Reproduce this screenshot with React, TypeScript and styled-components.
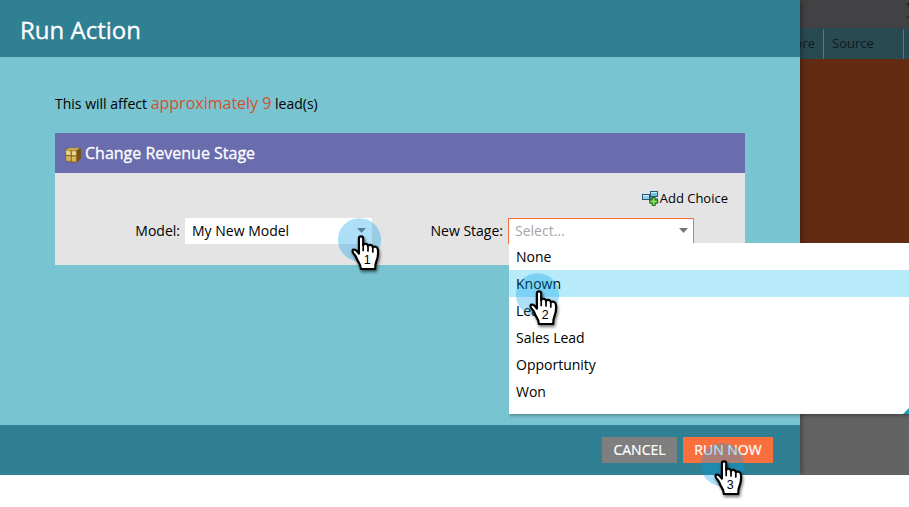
import React from "react";
import styled, { createGlobalStyle } from "styled-components";

const GlobalStyle = createGlobalStyle`
  * { box-sizing: border-box; }
  html, body { margin: 0; background: #fff; overflow: hidden; }
  body { font-family: "Open Sans", "Noto Sans", sans-serif; font-size: 14px; color: #000; }
`;

const Screen = styled.div`
  position: relative;
  width: 909px;
  height: 507px;
  overflow: hidden;
  background: #fff;
`;

const Stage = styled.div`
  display: flex;
  height: 475px;
`;

const Modal = styled.section`
  flex: 0 0 800px;
  display: flex;
  flex-direction: column;
  z-index: 1;
  box-shadow: 1px 0 6px rgba(0, 0, 0, 0.4);
  clip-path: inset(0 -12px 0 0);
`;

const Header = styled.header`
  height: 57px;
  padding: 14px 20px 0;
  background: #2f8092;
  color: #fff;
  font-size: 24px;
  line-height: 32px;
  -webkit-text-stroke: 0.3px #fff;
`;

const Content = styled.main`
  flex: 1;
  padding: 34px 55px 0;
  background: #79c4d1;
`;

const Notice = styled.p`
  margin: 0;
  height: 42px;
  line-height: 24px;
  white-space: pre;
`;

const Highlight = styled.span`
  color: #d2522b;
  font-size: 16px;
`;

const Panel = styled.div`
  height: 132px;
  background: #e4e4e4;
`;

const PanelTitle = styled.h2`
  display: flex;
  align-items: center;
  gap: 4px;
  height: 40px;
  margin: 0;
  padding-left: 10px;
  background: #6a6dad;
  color: #fff;
  font-size: 16px;
  font-weight: 400;
  -webkit-text-stroke: 0.3px #fff;
  svg { margin-top: 3px; }
`;

const Toolbar = styled.div`
  display: flex;
  justify-content: flex-end;
  align-items: center;
  gap: 1px;
  height: 45px;
  padding: 5px 17px 0 0;
  font-size: 13px;
`;

const Fields = styled.div`
  display: grid;
  grid-template-columns: 130px 187px 136px 186px;
`;

const Label = styled.label`
  line-height: 26px;
  text-align: right;
  padding-right: 5px;
`;

const Select = styled.div<{ $active?: boolean }>`
  display: flex;
  justify-content: space-between;
  align-items: center;
  height: 26px;
  padding: 0 5px 2px 6px;
  background: #fff;
  border: 1px solid ${(p) => (p.$active ? "#f9703e" : "#fff")};
  color: ${(p) => (p.$active ? "#a6a6a6" : "#000")};
`;

const Footer = styled.footer`
  display: flex;
  justify-content: flex-end;
  align-items: center;
  gap: 6px;
  height: 50px;
  padding-right: 27px;
  background: #2f8092;
`;

const Button = styled.button<{ $primary?: boolean }>`
  width: ${(p) => (p.$primary ? 90 : 75)}px;
  height: 26px;
  padding: 0;
  border: 0;
  background: ${(p) => (p.$primary ? "#f9703e" : "#7f7f7f")};
  color: #fff;
  font: 14px/26px "Open Sans", sans-serif;
  -webkit-text-stroke: 0.2px #fff;
`;

const Backdrop = styled.aside`
  flex: 1;
  display: flex;
  flex-direction: column;
  background: #636363;
`;

const TopStrip = styled.div`
  height: 28px;
  background: #424143;
  color: #1c2326;
  text-align: right;
  font: 22px/20px "Liberation Serif", serif;
  overflow: hidden;
  span { display: block; margin: -4px -8px 0 0; }
`;

const ColumnHeads = styled.div`
  display: grid;
  grid-template-columns: 24px 80px 5px;
  height: 31px;
  padding-top: 1px;
  background: #2a4a52;
  color: #11191b;
  font-size: 13px;
  line-height: 29px;
`;

const ColumnHead = styled.div<{ $clipped?: boolean }>`
  display: flex;
  justify-content: ${(p) => (p.$clipped ? "flex-end" : "flex-start")};
  padding: 0 8px;
  border-right: 1px solid #657477;
  overflow: hidden;
`;

const Canvas = styled.div`
  height: 300px;
  background: #642b13;
`;

const Menu = styled.ul`
  position: absolute;
  left: 509px;
  top: 243px;
  z-index: 2;
  width: 404px;
  height: 171px;
  margin: 0;
  padding: 0;
  list-style: none;
  background: #fff;
  box-shadow: 0 1px 4px rgba(0, 0, 0, 0.4);
  clip-path: inset(0 0 -8px 0);
`;

const Option = styled.li<{ $hovered?: boolean }>`
  height: 27px;
  padding-left: 7px;
  line-height: 27px;
  background: ${(p) => (p.$hovered ? "#b7ebf9" : "#fff")};
`;

const ResizeCorner = styled.svg`
  position: absolute;
  left: 394px;
  bottom: 0;
`;

const Marker = styled.svg<{ $x: number; $y: number }>`
  position: absolute;
  left: ${(p) => p.$x}px;
  top: ${(p) => p.$y}px;
  z-index: 3;
  overflow: visible;
  font-family: "Liberation Sans", sans-serif;
`;

const HandShadow = styled.g`
  filter: drop-shadow(1px 2px 1.5px rgba(0, 0, 0, 0.55));
`;

function Arrow() {
  return (
    <svg width="9" height="5">
      <path d="M0 0H9L4.5 5Z" fill="#777" />
    </svg>
  );
}

function BoxIcon() {
  return (
    <svg width="16" height="16" viewBox="0 0 16 16">
      <path d="M3 .5 15.7 1V11.5L11.5 15.7 1 14.5 0 3Z" fill="#76531a" />
      <path d="M.5 2.8 4 .7 15.2 1.1 11.7 3.4Z" fill="#c4a85a" />
      <path d="M.5 3 11.6 3.6V15L1.3 14Z" fill="#c9a64c" />
      <path d="M11.7 3.5 15.5 1.2V11.2L11.7 15Z" fill="#76510f" />
      <path d="M1.2 4 5.6 4.3V8L1.5 7.8ZM6.7 4.4 11 4.6V8.3L6.7 8.1Z" fill="#e9d793" />
      <path d="M.9 8.6 11.5 9M6.2 3.5V14.5" stroke="#7b581b" strokeWidth=".9" />
      <path d="M2 9.5 5.5 9.7V13.3L2 13ZM7 9.8 10.7 10V13.8L7 13.5Z" fill="#d9b95f" />
    </svg>
  );
}

function AddChoiceIcon() {
  return (
    <svg width="17" height="16" viewBox="0 0 17 16">
      <path d="M7 6H9V3M7 7H9V11" fill="none" stroke="#234d67" />
      <rect x=".5" y="4.5" width="7" height="5" fill="#8cd4ed" stroke="#27566f" />
      <path d="M1 5.5H7" stroke="#d9f6ff" />
      <rect x="8.5" y="1.5" width="7" height="5" fill="#72c5e7" stroke="#27566f" />
      <path d="M9 2.5H15" stroke="#c9f0fc" />
      <rect x="8.5" y="9" width="7" height="4" fill="#8cd4ed" stroke="#27566f" />
      <path d="M10.2 7.5H13.2V10H15.7V13H13.2V15.5H10.2V13H7.7V10H10.2Z" fill="#69cc3e" stroke="#23681e" />
      <path d="M11.7 8.5V14.5M8.7 11.5H14.7" stroke="#97e66c" />
    </svg>
  );
}

function StepMarker({ x, y, step }: { x: number; y: number; step: number }) {
  return (
    <Marker $x={x} $y={y} width="46" height="56" viewBox="0 0 46 56">
      <circle cx="21.5" cy="21.8" r="21.6" fill="#009fe8" fillOpacity=".32" />
      <HandShadow>
        <path
          d="M20.9 34.2V20.4C20.9 17.8 25.2 17.8 25.2 20.4V27.2C25.8 25 29.8 25.4 30 27.9C31 26 34.6 26.8 34.8 29.2C36.3 27.8 39.6 28.8 39.9 31.5C40.5 37 40 39.5 38.5 43C37.5 45.2 37.2 47.2 37.2 51H22.8C22.9 48.2 22 46.2 20.4 43.8C18.7 41.4 18.7 39.8 17.2 37.6C15.9 35.8 14 34.5 14.5 32.7C15.4 30.4 18.4 31.8 20.9 35.6Z"
          fill="#fff"
          stroke="#000"
          strokeWidth="2.2"
          strokeLinejoin="round"
        />
      </HandShadow>
      <path d="M25.2 26V32.5M30 28V33M34.8 29V34" stroke="#000" strokeWidth="1.7" strokeLinecap="round" />
      <text x="29.3" y="45.5" fontSize="12.5" textAnchor="middle" fill="#000">{step}</text>
    </Marker>
  );
}

const STAGES = ["None", "Known", "Lead", "Sales Lead", "Opportunity", "Won"];

export default function App() {
  return (
    <Screen>
      <GlobalStyle />
      <Stage>
        <Modal>
          <Header>Run Action</Header>
          <Content>
            <Notice>
              This will affect <Highlight>approximately 9</Highlight> lead(s)
            </Notice>
            <Panel>
              <PanelTitle><BoxIcon />Change Revenue Stage</PanelTitle>
              <Toolbar><AddChoiceIcon />Add Choice</Toolbar>
              <Fields>
                <Label>Model:</Label>
                <Select>My New Model<Arrow /></Select>
                <Label>New Stage:</Label>
                <Select $active>Select...<Arrow /></Select>
              </Fields>
            </Panel>
          </Content>
          <Footer>
            <Button>CANCEL</Button>
            <Button $primary>RUN NOW</Button>
          </Footer>
        </Modal>
        <Backdrop>
          <TopStrip><span>y</span></TopStrip>
          <ColumnHeads>
            <ColumnHead $clipped>Score</ColumnHead>
            <ColumnHead>Source</ColumnHead>
          </ColumnHeads>
          <Canvas />
        </Backdrop>
      </Stage>
      <Menu>
        {STAGES.map((stage) => (
          <Option key={stage} $hovered={stage === "Known"}>{stage}</Option>
        ))}
        <ResizeCorner width="6" height="6"><path d="M0 6 6 0V6Z" fill="#239fbd" /></ResizeCorner>
      </Menu>
      <StepMarker x={338} y={218} step={1} />
      <StepMarker x={516} y={273} step={2} />
      <StepMarker x={701} y={443} step={3} />
    </Screen>
  );
}
